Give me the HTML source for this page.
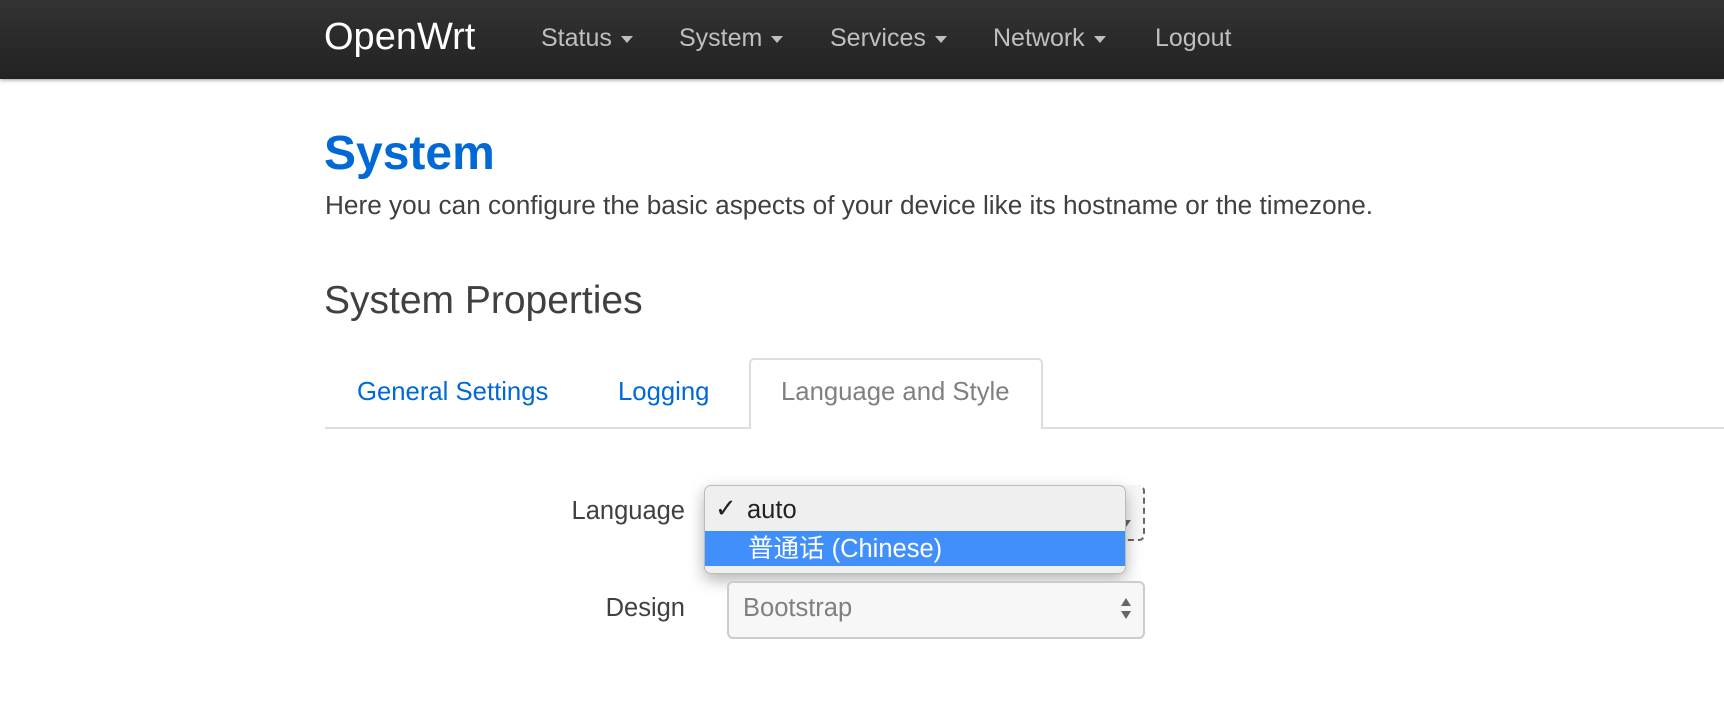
<!DOCTYPE html>
<html><head><meta charset="utf-8"><style>
*{margin:0;padding:0;box-sizing:border-box}
body{width:1724px;height:724px;background:#fff;font-family:"Liberation Sans","Noto Sans CJK SC",sans-serif;color:#404040;position:relative;overflow:hidden}
.nav{position:absolute;left:0;top:0;width:1724px;height:79px;background:linear-gradient(#333,#222);box-shadow:0 1px 4px rgba(0,0,0,.4)}
.a{position:absolute;white-space:nowrap}
.brand{left:324px;top:16px;font-size:38px;color:#fff}
.ni{top:24px;font-size:25px;color:#bfbfbf}
.ni .c{display:inline-block;width:0;height:0;border-left:6px solid transparent;border-right:6px solid transparent;border-top:7px solid #bfbfbf;vertical-align:middle;margin-left:9px}
h1{position:absolute;left:324px;top:126px;font-size:48px;color:#0069d6;font-weight:bold}
.desc{left:325px;top:190px;font-size:26.2px}
.h2{left:324px;top:279px;font-size:39px}
.line{position:absolute;left:325px;top:427px;width:1400px;height:2px;background:#ddd}
.tab{position:absolute;left:749px;top:358px;width:294px;height:71px;border:2px solid #ddd;border-bottom:none;border-radius:5px 5px 0 0;background:#fff}
.t{top:378px;font-size:25.7px;color:#0069d6}
.lbl{font-size:25.5px;color:#404040;text-align:right;width:300px}
.sel{position:absolute;left:727px;width:418px;border:2px solid #ccc;border-radius:6px;background:#f7f7f7}
.pop{position:absolute;left:704px;top:485px;width:422px;height:89px;background:#efefef;border:1px solid #bbb;border-radius:7px;box-shadow:0 6px 16px rgba(0,0,0,.3);overflow:hidden}
.hl{position:absolute;left:0;top:45px;width:100%;height:35px;background:#418ffb}
.arr{position:absolute;width:0;height:0;border-left:5px solid transparent;border-right:5px solid transparent}
</style></head><body>
<div class="nav">
<div class="a brand">OpenWrt</div>
<div class="a ni" style="left:541px">Status<span class="c"></span></div>
<div class="a ni" style="left:679px">System<span class="c"></span></div>
<div class="a ni" style="left:830px">Services<span class="c"></span></div>
<div class="a ni" style="left:993px">Network<span class="c"></span></div>
<div class="a ni" style="left:1155px">Logout</div>
</div>
<h1>System</h1>
<div class="a desc">Here you can configure the basic aspects of your device like its hostname or the timezone.</div>
<div class="a h2">System Properties</div>
<div class="line"></div>
<div class="tab"></div>
<div class="a t" style="left:357px">General Settings</div>
<div class="a t" style="left:618px">Logging</div>
<div class="a t" style="left:781px;color:#808080">Language and Style</div>

<div class="a lbl" style="left:385px;top:497px">Language</div>
<div class="sel" style="top:485px;height:56px;border:2px dashed #555;border-left:none;border-top:none;border-color:#666"></div>
<div class="arr" style="left:1121px;top:520px;border-top:7px solid #666"></div>
<div class="pop">
<div class="hl"></div>
<div class="a" style="left:10px;top:8px;font-size:26px;color:#222;font-weight:bold;font-family:'DejaVu Sans',sans-serif">✓</div>
<div class="a" style="left:42px;top:10px;font-size:25.5px;color:#222">auto</div>
<div class="a" style="left:43px;top:42px;font-size:25.5px;color:#fff">普通话 (Chinese)</div>
</div>

<div class="a lbl" style="left:385px;top:594px">Design</div>
<div class="sel" style="top:581px;height:58px"></div>
<div class="a" style="left:743px;top:594px;font-size:25.5px;color:#808080">Bootstrap</div>
<div class="arr" style="left:1121px;top:598px;border-bottom:8px solid #666"></div>
<div class="arr" style="left:1121px;top:611px;border-top:8px solid #666"></div>
</body></html>
